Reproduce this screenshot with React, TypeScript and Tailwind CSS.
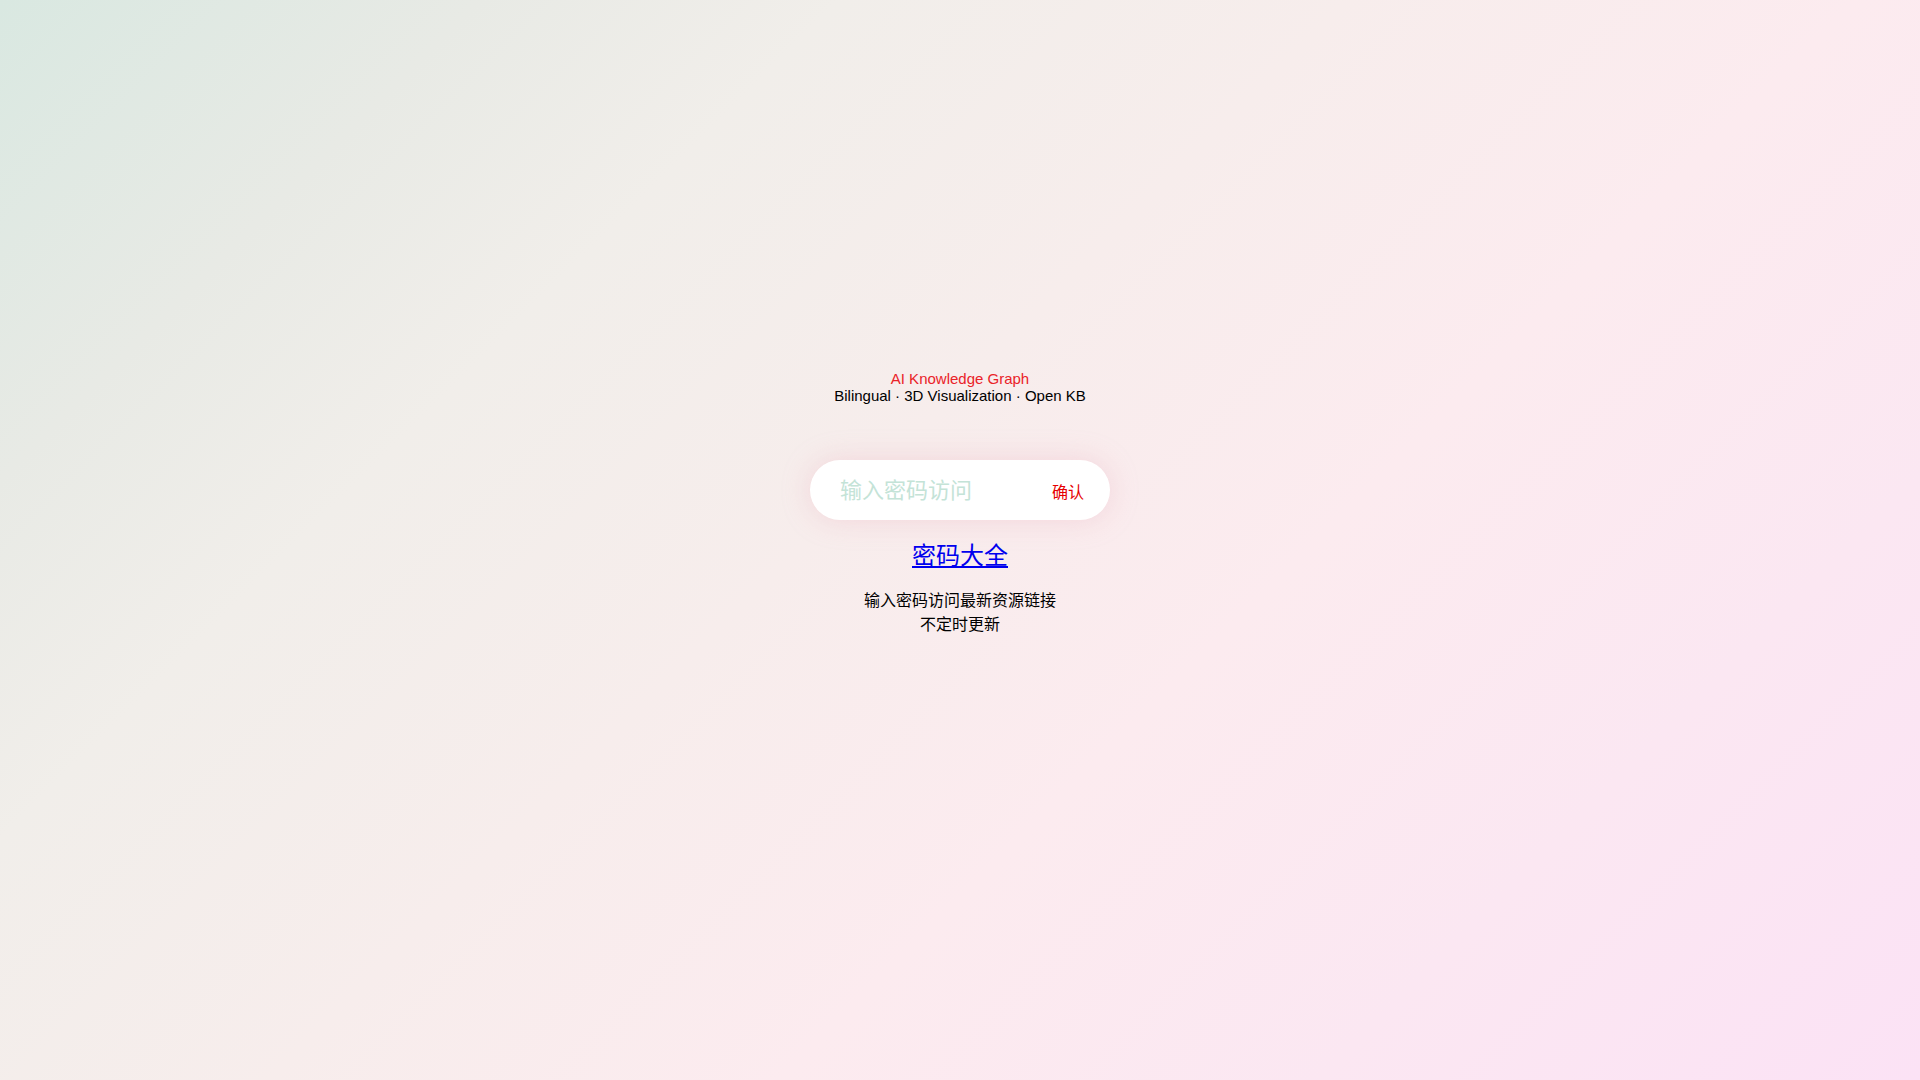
import React from "react";

export default function App() {
  return (
    <div className="w-full h-[1080px] overflow-hidden flex flex-col items-center pt-[370px] text-black font-['Liberation_Sans',Arial,'Noto_Sans_CJK_SC',sans-serif] bg-[linear-gradient(135deg,#d9e8e1_0%,#e8eae5_16%,#f1eeea_28%,#f7edec_45%,#fcebef_62%,#fbe7f2_80%,#fbe2f5_100%)]">
      <div className="text-center text-[15px] leading-[17px]">
        <div className="text-[#ea2228]">AI Knowledge Graph</div>
        <div>Bilingual · 3D Visualization · Open KB</div>
      </div>

      <div className="mt-[56px] w-[300px] h-[60px] rounded-full bg-white flex items-center pl-[30px] pr-[26px] shadow-[0_0_28px_rgba(235,170,185,0.35)]">
        <input
          type="text"
          placeholder="输入密码访问"
          className="flex-1 min-w-0 mb-[4px] bg-transparent outline-none border-0 text-[22px] placeholder:text-[#c4e3d7] text-black font-['Noto_Sans_CJK_SC','Liberation_Sans',sans-serif]"
        />
        <button className="text-[16px] text-[#e60000] bg-transparent border-0 p-0 mt-[2px] font-['Noto_Sans_CJK_SC','Liberation_Sans',sans-serif]">
          确认
        </button>
      </div>

      <a
        href="#"
        className="mt-[18px] text-[24px] leading-[32px] text-[#0000ee] underline font-['Noto_Sans_CJK_SC','Liberation_Sans',sans-serif]"
      >
        密码大全
      </a>

      <div className="mt-[17px] text-center text-[16px] leading-[24px] font-['Noto_Sans_CJK_SC','Liberation_Sans',sans-serif]">
        <div>输入密码访问最新资源链接</div>
        <div>不定时更新</div>
      </div>
    </div>
  );
}
